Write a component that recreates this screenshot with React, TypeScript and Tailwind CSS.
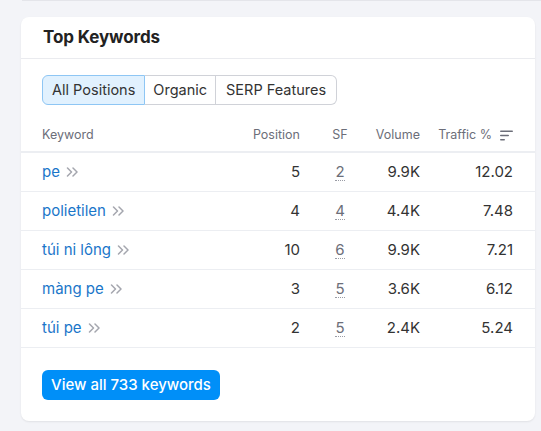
import React from "react";

const rows = [
  { k: "pe", p: "5", sf: "2", v: "9.9K", t: "12.02" },
  { k: "polietilen", p: "4", sf: "4", v: "4.4K", t: "7.48" },
  { k: "túi ni lông", p: "10", sf: "6", v: "9.9K", t: "7.21" },
  { k: "màng pe", p: "3", sf: "5", v: "3.6K", t: "6.12" },
  { k: "túi pe", p: "2", sf: "5", v: "2.4K", t: "5.24" },
];

function Chevrons() {
  return (
    <svg width="13" height="10" viewBox="0 0 13 10" fill="none" stroke="#a4a6ae" strokeWidth="1.5" strokeLinecap="round" strokeLinejoin="round">
      <path d="M1.5 1L5.5 5L1.5 9" />
      <path d="M7 1L11 5L7 9" />
    </svg>
  );
}

function SortIcon() {
  return (
    <svg width="13" height="11" viewBox="0 0 13 11" fill="#6c6e79">
      <rect x="0" y="0.5" width="13" height="1.6" rx="0.8" />
      <rect x="0" y="4.7" width="9" height="1.6" rx="0.8" />
      <rect x="0" y="8.9" width="5" height="1.6" rx="0.8" />
    </svg>
  );
}

export default function App() {
  return (
    <div className="w-[541px] h-[431px] bg-[#f3f4f8] overflow-hidden" style={{ fontFamily: "Inter, 'Noto Sans', sans-serif" }}>
      <div className="ml-[22px] h-[1px] bg-[#e4e5ea]" />
      <div className="ml-[21px] mt-[16px] w-[514px] bg-white rounded-[8px] shadow-[0_1px_2px_rgba(0,0,0,0.08)]">
        <div className="h-[42px] flex items-center px-[22px] border-b border-[#eaebef]">
          <h2 className="text-[17px] font-bold text-[#222] tracking-[-0.1px]">Top Keywords</h2>
        </div>
        <div className="px-[21px] pt-[16px]">
          <div className="flex h-[30px] text-[14.5px] text-[#333]">
            <div className="px-[9px] flex items-center bg-[#e1f1fe] border border-[#8ec6f4] rounded-l-[6px]">All Positions</div>
            <div className="px-[8px] flex items-center border-y border-r border-[#d0d2d8]">Organic</div>
            <div className="px-[10px] flex items-center border-y border-r border-[#d0d2d8] rounded-r-[6px]">SERP Features</div>
          </div>
        </div>
        <div className="mt-[14px]">
          <div className="flex items-center h-[34px] pl-[21px] pr-[22px] text-[12.5px] text-[#6c6e79] border-b-2 border-[#eceef2]">
            <div className="flex-1">Keyword</div>
            <div className="w-[80px] flex justify-end whitespace-nowrap">Position</div>
            <div className="w-[80px] flex justify-center">SF</div>
            <div className="w-[40px] flex justify-end whitespace-nowrap">Volume</div>
            <div className="w-[93px] flex justify-end items-center gap-[8px] whitespace-nowrap">
              <span>Traffic %</span>
              <SortIcon />
            </div>
          </div>
          {rows.map((r) => (
            <div key={r.k} className="flex items-center h-[39px] pl-[21px] pr-[22px] text-[15px] border-b border-[#eceef2]">
              <div className="flex-1 flex items-center gap-[6px]">
                <span className="text-[#1a76c9]">{r.k}</span>
                <Chevrons />
              </div>
              <div className="w-[80px] flex justify-end text-[#333]">{r.p}</div>
              <div className="w-[80px] flex justify-center">
                <span className="text-[#6c6e79] border-b border-dotted border-[#9a9ca5] leading-[17px]">{r.sf}</span>
              </div>
              <div className="w-[40px] flex justify-end text-[#333] whitespace-nowrap">{r.v}</div>
              <div className="w-[93px] flex justify-end text-[#333]">{r.t}</div>
            </div>
          ))}
        </div>
        <div className="px-[21px] pt-[22px] pb-[21px]">
          <button className="h-[30px] px-[9px] rounded-[6px] bg-[#008ff8] text-white text-[15px] font-medium">
            View all 733 keywords
          </button>
        </div>
      </div>
    </div>
  );
}
